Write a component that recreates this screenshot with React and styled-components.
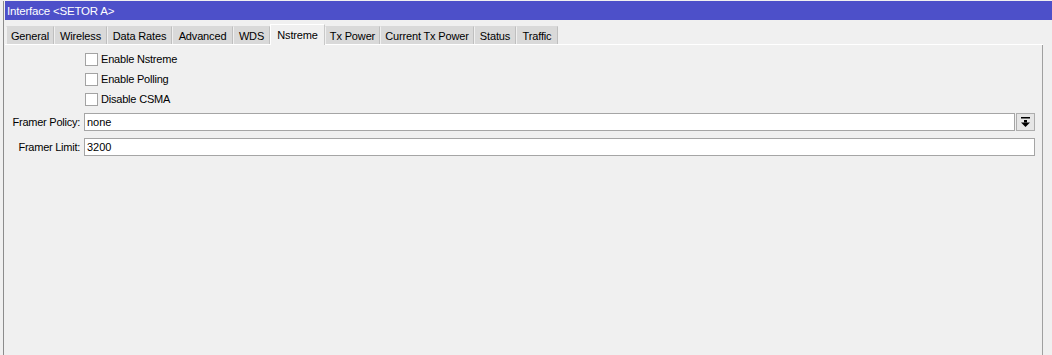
import React from 'react';
import styled, { createGlobalStyle } from 'styled-components';

const GlobalStyle = createGlobalStyle`
  html, body {
    margin: 0;
    padding: 0;
    background: #f0f0f0;
    overflow: hidden;
  }
  body {
    font-family: "Liberation Sans", Arial, sans-serif;
    font-size: 11px;
    color: #000;
  }
`;

const Screen = styled.div`
  height: 355px;
  padding-top: 1px;
  padding-left: 3px;
  box-sizing: border-box;
  display: flex;
`;

const Window = styled.div`
  flex: 1;
  border-left: 1px solid #8c8c8c;
  padding-left: 1px;
  display: flex;
  flex-direction: column;
`;

const TitleBar = styled.div`
  height: 19px;
  background: #4d50c9;
  color: #fff;
  font-size: 11.5px;
  letter-spacing: -0.2px;
  display: flex;
  align-items: center;
  padding-left: 2px;
`;

const Body = styled.div`
  flex: 1;
  display: flex;
  flex-direction: column;
  padding-top: 3px;
  width: 1038px;
`;

const TabStrip = styled.div`
  display: flex;
  align-items: flex-end;
  height: 21px;
  padding-left: 1px;
  border-bottom: 1px solid #ffffff;
`;

const Tab = styled.div`
  width: ${p => p.$w}px;
  height: ${p => (p.$active ? 21 : 18)}px;
  box-sizing: border-box;
  display: flex;
  align-items: center;
  justify-content: center;
  background: ${p => (p.$active ? '#f0f0f0' : '#d9d9d9')};
  border-left: 1px solid ${p => (p.$active ? '#ffffff' : '#f0f0f0')};
  border-right: 1px solid ${p => (p.$active ? '#c8c8c8' : '#bfbfbf')};
  border-top: 1px solid ${p => (p.$active ? '#ffffff' : '#d9d9d9')};
  padding-top: ${p => (p.$active ? 0 : 1)}px;
  letter-spacing: -0.15px;
  white-space: nowrap;
  margin-bottom: ${p => (p.$active ? -1 : 0)}px;
`;

const Panel = styled.div`
  flex: 1;
  border-right: 1px solid #a0a0a0;
  display: flex;
  flex-direction: column;
  padding-top: 4px;
`;

const CheckRow = styled.label`
  height: 20px;
  display: flex;
  align-items: center;
  padding-left: 80px;
  letter-spacing: -0.2px;
`;

const Box = styled.span`
  width: 13px;
  height: 13px;
  box-sizing: border-box;
  border: 1px solid #a3a3a3;
  background: #fff;
  margin-right: 3px;
`;

const FieldRow = styled.div`
  display: flex;
  align-items: center;
  height: 19px;
  margin-top: ${p => p.$gap}px;
  padding-right: 7px;
`;

const Label = styled.div`
  width: 75px;
  text-align: right;
  padding-right: 4px;
  letter-spacing: -0.25px;
  white-space: nowrap;
`;

const Input = styled.div`
  flex: 1;
  height: 18px;
  box-sizing: border-box;
  border: 1px solid #a5a5a5;
  background: #fff;
  display: flex;
  align-items: center;
  padding-left: 2px;
`;

const DropButton = styled.div`
  width: 19px;
  height: 18px;
  box-sizing: border-box;
  margin-left: 1px;
  border: 1px solid #adadad;
  background: #e6e6e6;
  display: flex;
  align-items: center;
  justify-content: center;
`;

const tabs = [
  ['General', 48],
  ['Wireless', 53],
  ['Data Rates', 65],
  ['Advanced', 61],
  ['WDS', 37],
  ['Nstreme', 55],
  ['Tx Power', 55],
  ['Current Tx Power', 94],
  ['Status', 42],
  ['Traffic', 42],
];

const DownIcon = () => (
  <svg width="9" height="10" viewBox="0 0 9 10">
    <rect x="0" y="0" width="9" height="1.5" fill="#000" />
    <rect x="3" y="3" width="3" height="2.5" fill="#000" />
    <polygon points="0,5.5 9,5.5 4.5,10" fill="#000" />
  </svg>
);

export default function App() {
  return (
    <>
      <GlobalStyle />
      <Screen>
        <Window>
          <TitleBar>Interface &lt;SETOR A&gt;</TitleBar>
          <Body>
            <TabStrip>
              {tabs.map(([name, w]) => (
                <Tab key={name} $w={w} $active={name === 'Nstreme'}>
                  {name}
                </Tab>
              ))}
            </TabStrip>
            <Panel>
              <CheckRow><Box />Enable Nstreme</CheckRow>
              <CheckRow><Box />Enable Polling</CheckRow>
              <CheckRow><Box />Disable CSMA</CheckRow>
              <FieldRow $gap={3}>
                <Label>Framer Policy:</Label>
                <Input>none</Input>
                <DropButton><DownIcon /></DropButton>
              </FieldRow>
              <FieldRow $gap={6}>
                <Label>Framer Limit:</Label>
                <Input>3200</Input>
              </FieldRow>
            </Panel>
          </Body>
        </Window>
      </Screen>
    </>
  );
}
